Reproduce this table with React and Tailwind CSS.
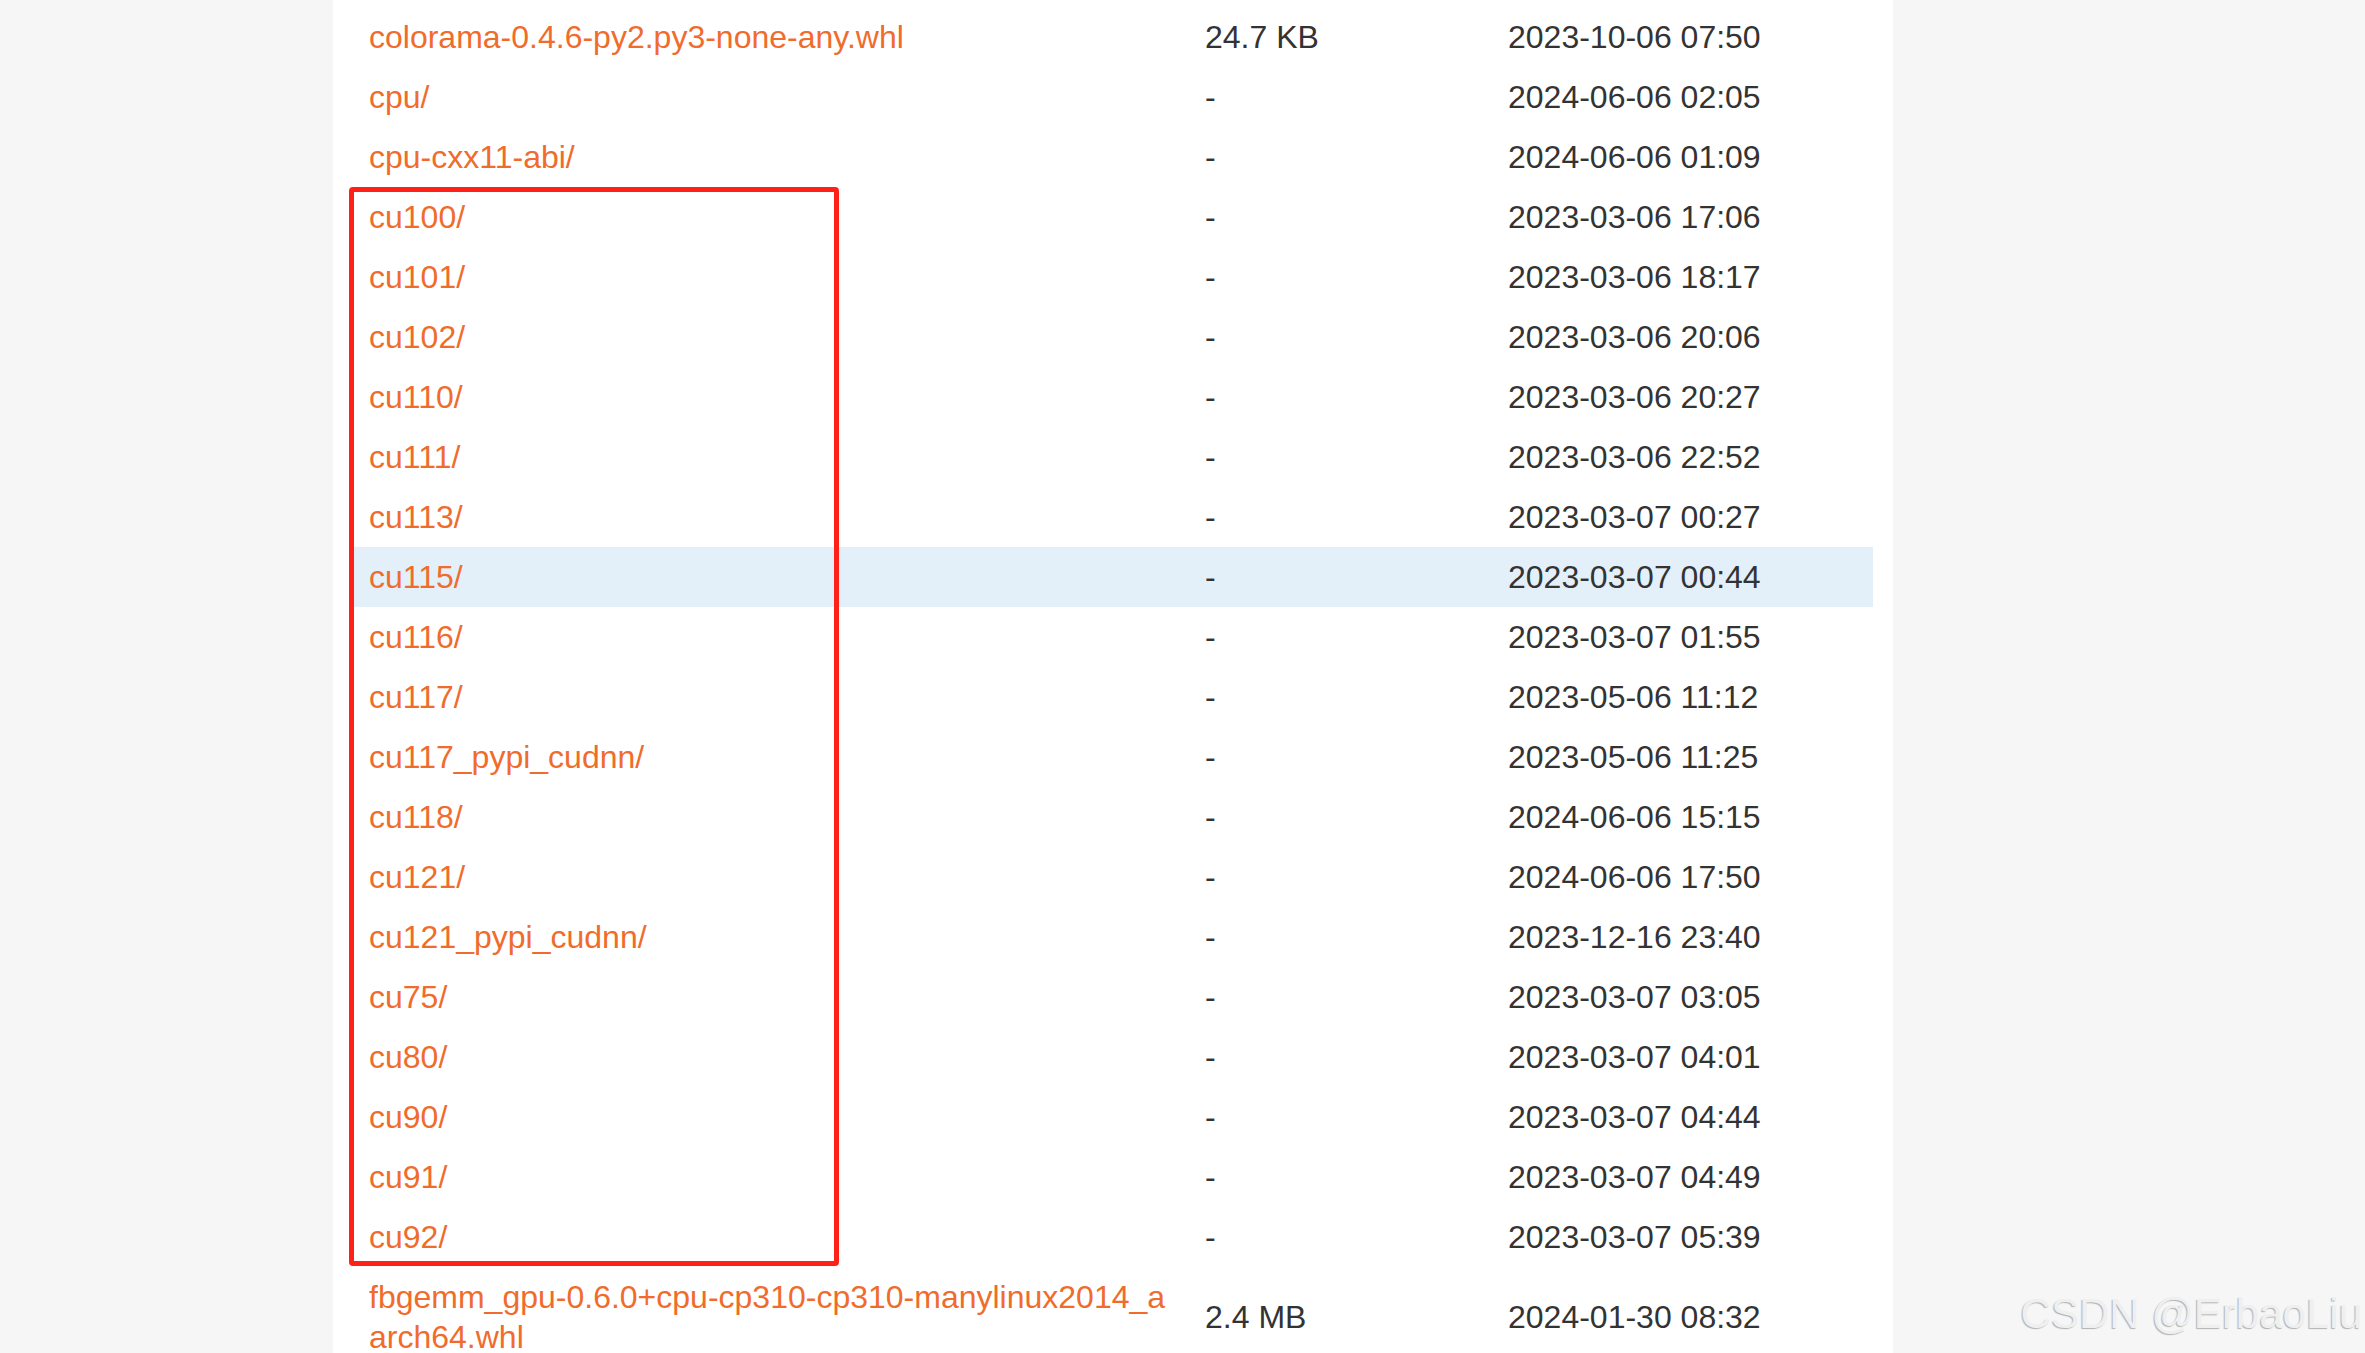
import React from 'react';

const rows = [
    { name: 'colorama-0.4.6-py2.py3-none-any.whl', size: '24.7 KB', date: '2023-10-06 07:50' },
    { name: 'cpu/', size: '-', date: '2024-06-06 02:05' },
    { name: 'cpu-cxx11-abi/', size: '-', date: '2024-06-06 01:09' },
    { name: 'cu100/', size: '-', date: '2023-03-06 17:06' },
    { name: 'cu101/', size: '-', date: '2023-03-06 18:17' },
    { name: 'cu102/', size: '-', date: '2023-03-06 20:06' },
    { name: 'cu110/', size: '-', date: '2023-03-06 20:27' },
    { name: 'cu111/', size: '-', date: '2023-03-06 22:52' },
    { name: 'cu113/', size: '-', date: '2023-03-07 00:27' },
    { name: 'cu115/', size: '-', date: '2023-03-07 00:44', hover: true },
    { name: 'cu116/', size: '-', date: '2023-03-07 01:55' },
    { name: 'cu117/', size: '-', date: '2023-05-06 11:12' },
    { name: 'cu117_pypi_cudnn/', size: '-', date: '2023-05-06 11:25' },
    { name: 'cu118/', size: '-', date: '2024-06-06 15:15' },
    { name: 'cu121/', size: '-', date: '2024-06-06 17:50' },
    { name: 'cu121_pypi_cudnn/', size: '-', date: '2023-12-16 23:40' },
    { name: 'cu75/', size: '-', date: '2023-03-07 03:05' },
    { name: 'cu80/', size: '-', date: '2023-03-07 04:01' },
    { name: 'cu90/', size: '-', date: '2023-03-07 04:44' },
    { name: 'cu91/', size: '-', date: '2023-03-07 04:49' },
    { name: 'cu92/', size: '-', date: '2023-03-07 05:39' },
    { name: 'fbgemm_gpu-0.6.0+cpu-cp310-cp310-manylinux2014_aarch64.whl', size: '2.4 MB', date: '2024-01-30 08:32' },
];

const FileRow = ({ row }) => (
    <div className={`grid grid-cols-[836px_303px_381px] items-center ${row.hover ? 'bg-[#e3f0fa]' : ''}`}>
        <div className="px-4 py-[10px] break-all">
            <a href="#" className="text-[#f06c2c] no-underline">{row.name}</a>
        </div>
        <div className="px-4 py-[10px] text-[#333333]">{row.size}</div>
        <div className="px-4 py-[10px] text-[#333333]">{row.date}</div>
    </div>
);

const App = () => {
    return (
        <div className="relative h-[1353px] w-full overflow-hidden bg-[#f6f6f6] font-['Liberation_Sans',Arial,sans-serif]">
            <div className="ml-[333px] w-[1560px] h-full bg-white px-5 pt-[7px]">
                <div className="relative text-[32px] leading-[40px]">
                    {rows.map(row => <FileRow key={row.name} row={row} />)}
                    {/* red annotation box round the cuda folders */}
                    <div className="absolute left-[-4px] top-[180px] w-[490px] h-[1079px] border-[5px] border-[#ff2117] rounded-[4px] pointer-events-none" />
                </div>
            </div>
            <div className="absolute right-[3px] top-[1293px] text-[42px] leading-none text-[#efefef] [text-shadow:-1px_1px_1px_rgba(0,0,0,0.28)] font-['Liberation_Sans',Arial,sans-serif]">
                CSDN @ErbaoLiu
            </div>
        </div>
    );
};

export default App;
